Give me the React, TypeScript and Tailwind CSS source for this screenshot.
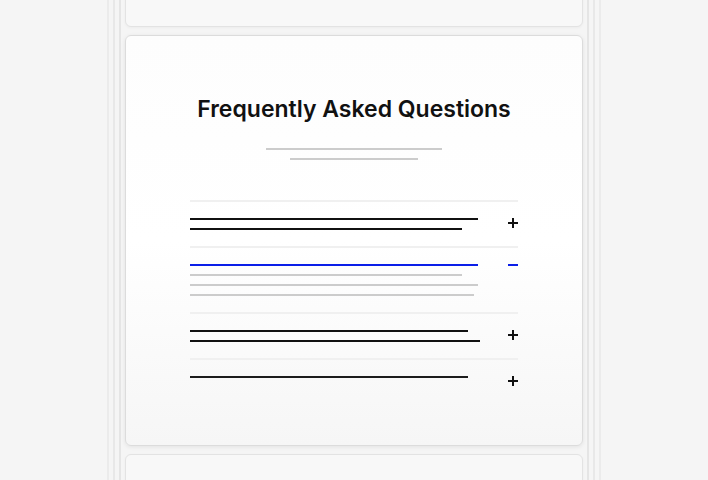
import React from 'react';

type Faq = {
  lines: number[];
  open?: boolean;
  answer?: number[];
};

const faqs: Faq[] = [
  { lines: [288, 272] },
  { lines: [288], open: true, answer: [272, 288, 284] },
  { lines: [278, 290] },
  { lines: [278] },
];

const PlusIcon = () => (
  <svg width="10" height="10" viewBox="0 0 10 10" className="shrink-0">
    <path d="M5 0v10M0 5h10" stroke="#111" strokeWidth="2" />
  </svg>
);

const MinusIcon = () => (
  <svg width="10" height="10" viewBox="0 0 10 10" className="shrink-0">
    <path d="M0 1h10" stroke="#0b1ee8" strokeWidth="2" />
  </svg>
);

const GhostCard = () => (
  <div className="h-[411px] w-[458px] shrink-0 rounded-md border border-[#e3e3e3] bg-[#f8f8f8] shadow-[0_1px_3px_rgba(0,0,0,0.04)]" />
);

const FaqCard = () => (
  <div className="h-[411px] w-[458px] shrink-0 rounded-md border border-[#dcdcdc] bg-gradient-to-b from-[#fdfdfd] via-white to-[#f6f6f6] shadow-[0_1px_4px_rgba(0,0,0,0.08)] flex flex-col items-center pt-[59px]">
    <h2 className="text-[23px] leading-[28px] font-semibold text-[#111] font-['Inter',sans-serif]">
      Frequently Asked Questions
    </h2>
    <div className="mt-[25px] h-[2px] w-[176px] bg-[#cccccc]" />
    <div className="mt-[8px] h-[2px] w-[128px] bg-[#cccccc]" />

    <div className="mt-[40px] w-[328px] flex flex-col">
      {faqs.map((f, i) => (
        <div key={i} className="border-t-2 border-[#f0f0f0] py-4 flex justify-between items-start">
          <div className="flex flex-col gap-2">
            {f.lines.map((w, j) => (
              <div
                key={j}
                className={f.open ? 'h-[2px] bg-[#0b1ee8]' : i === 3 ? 'h-[2px] bg-[#1c1c1c]' : 'h-[2px] bg-[#111]'}
                style={{ width: w }}
              />
            ))}
            {f.answer?.map((w, j) => (
              <div key={'a' + j} className="h-[2px] bg-[#cccccc]" style={{ width: w }} />
            ))}
          </div>
          {f.open ? <MinusIcon /> : <PlusIcon />}
        </div>
      ))}
    </div>
  </div>
);

export default function App() {
  return (
    <div className="h-screen w-full overflow-hidden bg-[#f5f5f5] flex justify-center">
      <div className="h-full border-x-2 border-[#ebebeb] px-[4px]">
        <div className="h-full border-x-2 border-[#e8e8e8] px-[4px]">
          <div className="h-full border-x-2 border-[#e5e5e5] px-[4px] flex flex-col justify-center gap-2">
            <GhostCard />
            <FaqCard />
            <GhostCard />
          </div>
        </div>
      </div>
    </div>
  );
}
